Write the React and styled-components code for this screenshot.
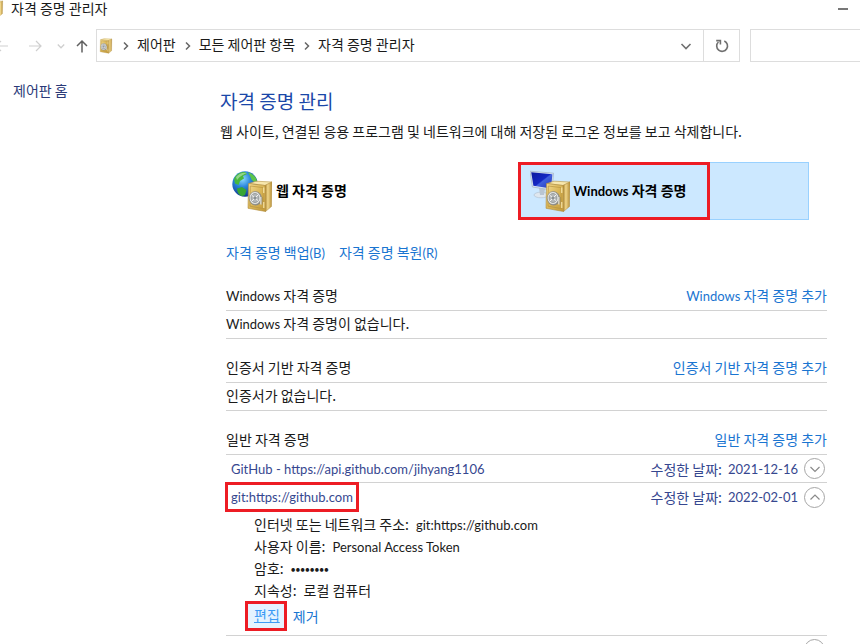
import React, {useState} from "react";
import styled, {createGlobalStyle} from "styled-components";

const GlobalStyle = createGlobalStyle`
  * {
    box-sizing: border-box;
  }

  body {
    margin: 0;
    background: #ffffff;
    color: #1a1a1a;
    font-family: "Noto Sans CJK KR", "Noto Sans", sans-serif;
    font-size: 14px;
    line-height: 20px;
  }

  button,
  input {
    font: inherit;
    color: inherit;
  }
`;

// Gold safe shared by both vault icons
const Safe = ({id}) => (
  <g>
    <defs>
      <linearGradient id={`${id}-front`} x1="0" y1="0" x2="1" y2="1">
        <stop offset="0" stopColor="#f3dc93" />
        <stop offset="0.5" stopColor="#d9b556" />
        <stop offset="1" stopColor="#c39a3b" />
      </linearGradient>
      <linearGradient id={`${id}-side`} x1="0" y1="0" x2="1" y2="0">
        <stop offset="0" stopColor="#a87f28" />
        <stop offset="0.4" stopColor="#f0d68a" />
        <stop offset="1" stopColor="#b48c35" />
      </linearGradient>
    </defs>
    <path d="M17 13.5 L24 11.2 L40 12 L33 15.5 Z" fill="#f7e7ae" stroke="#b9963f" strokeWidth="0.6" />
    <path d="M33 15.5 L40 12 L39.5 36.5 L33.5 41.5 Z" fill={`url(#${id}-side)`} stroke="#b08c3c" strokeWidth="0.5" />
    <path d="M16.5 13.5 L33 15.5 L33.5 41.5 L16 38.3 Z" fill={`url(#${id}-front)`} stroke="#b08c3c" strokeWidth="0.6" />
    <path d="M18.3 16 L31 17.6 L31.3 38.6 L18 36.2 Z" fill="none" stroke="#b8943f" strokeWidth="0.7" />
    <path d="M31.8 17.5 V23 M31.8 32 V38" stroke="#fff0b9" strokeWidth="1" />
    <ellipse cx="23.6" cy="28.5" rx="6.3" ry="7" fill="#8e8c86" />
    <ellipse cx="23" cy="28" rx="5.8" ry="6.5" fill="#e3e4e2" stroke="#77746b" strokeWidth="0.5" />
    <ellipse cx="23" cy="28" rx="3.9" ry="4.5" fill="#b4b8b9" stroke="#8c9092" strokeWidth="0.8" />
    <path d="M20 25.4 L26 30.6 M26 25 L20 31" stroke="#f2f2f2" strokeWidth="1" />
    <circle cx="23" cy="28" r="1.3" fill="#8a9093" />
    <path d="M29 27 V34.5" stroke="#e9e8e1" strokeWidth="1.4" />
    <path d="M30 27 V34.5" stroke="#77705c" strokeWidth="0.6" />
  </g>
);

const WebVaultIcon = () => (
  <svg width="40" height="42" viewBox="0 0 40 42" aria-hidden="true">
    <defs>
      <radialGradient id="globe" cx="0.4" cy="0.3" r="0.7">
        <stop offset="0" stopColor="#8fdcff" />
        <stop offset="0.45" stopColor="#2b86dc" />
        <stop offset="1" stopColor="#123a8f" />
      </radialGradient>
    </defs>
    <circle cx="13" cy="14" r="12.7" fill="url(#globe)" />
    <path d="M2 9 C4 4 9 1.5 13 2 L15 4 L11 6 L12 8.5 L8 11 L6.5 15 L3 13.5 Z" fill="#49b83d" />
    <path d="M16 2.2 C21 3.5 24 7 25 11 L22 12 L19.5 9.5 L18 6 Z" fill="#5cc549" />
    <path d="M5 18.5 L10 17 L14.5 20 L13 25 L10 26.2 C7 25.2 5 22.5 5 18.5 Z" fill="#37a534" />
    <path d="M4 7 C7 3 12 2 15 3 C12 4 8 6 5 10 Z" fill="#ffffff" opacity="0.4" />
    <Safe id="web-safe" />
  </svg>
);

const WindowsVaultIcon = () => (
  <svg width="40" height="42" viewBox="0 0 40 42" aria-hidden="true">
    <defs>
      <linearGradient id="screen" x1="0" y1="0" x2="1" y2="1">
        <stop offset="0" stopColor="#0d1a9c" />
        <stop offset="0.5" stopColor="#1428c4" />
        <stop offset="0.55" stopColor="#3f60de" />
        <stop offset="1" stopColor="#2435b8" />
      </linearGradient>
    </defs>
    <ellipse cx="11" cy="25" rx="7" ry="2.8" fill="#dfe7ef" stroke="#afbdcc" strokeWidth="0.6" />
    <path d="M9 18 L15 19 L14 25 L10 25 Z" fill="#b9c5d2" />
    <path d="M0 1.2 L23.5 3.2 L22 20 L2.4 17 Z" fill="#dce7f2" stroke="#9fb0c3" strokeWidth="0.7" />
    <path d="M1.2 2.2 L22.4 4.2 L21 18.6 L3.4 15.8 Z" fill="url(#screen)" />
    <Safe id="windows-safe" />
  </svg>
);

const SafeIcon = ({size = 16}) => (
  <svg width={size} height={size} viewBox="14 10 28 33" aria-hidden="true">
    <Safe id={`safe-${size}`} />
  </svg>
);

const Glyph = ({d, size = 14, width = 1.5}) => (
  <svg width={size} height={size} viewBox="0 0 14 14" fill="none" stroke="currentColor" strokeWidth={width} aria-hidden="true">
    <path d={d} />
  </svg>
);

const BACK = "M13 7 H1 M6 2 L1 7 L6 12";
const FORWARD = "M1 7 H13 M8 2 L13 7 L8 12";
const UP = "M7 13.5 V2 M2 7 L7 2 L12 7";
const CHEVRON_DOWN = "M2.5 5 L7 9.5 L11.5 5";
const CHEVRON_UP = "M2.5 9.5 L7 5 L11.5 9.5";
const CHEVRON_RIGHT = "M5 3.5 L8.5 7 L5 10.5";

const RefreshIcon = () => (
  <svg width="14" height="14" viewBox="0 0 14 14" fill="none" stroke="currentColor" strokeWidth="1.6" aria-hidden="true">
    <path d="M9.3 2 A5.4 5.4 0 1 1 3.4 3" />
    <path d="M1.2 1.6 H5.4 V5.6" />
  </svg>
);

const details = [
  {label: "인터넷 또는 네트워크 주소:", value: "git:https://github.com", latin: true},
  {label: "사용자 이름:", value: "Personal Access Token", latin: true},
  {label: "암호:", value: "••••••••"},
  {label: "지속성:", value: "로컬 컴퓨터"},
];

const Credential = ({name, date, open, marked, onToggle}) => (
  <EntryRow>
    <Name>
      {name}
      {marked && <Marker $v={5} $h={6} />}
    </Name>
    <Modified>
      <span>수정한 날짜:</span>
      <DateText>{date}</DateText>
      <Expander type="button" aria-label="세부 정보" aria-expanded={open} onClick={onToggle}>
        <Glyph d={open ? CHEVRON_UP : CHEVRON_DOWN} size={14} width={1.2} />
      </Expander>
    </Modified>
  </EntryRow>
);

const App = () => {
  const [open, setOpen] = useState(true);

  return (
    <Window>
      <GlobalStyle />
      <TitleBar>
        <TitleIcon>
          <SafeIcon size={17} />
        </TitleIcon>
        <WindowTitle>자격 증명 관리자</WindowTitle>
        <Minimize type="button" aria-label="최소화" />
      </TitleBar>

      <Toolbar>
        <NavButtons>
          <BackButton type="button" aria-label="뒤로" disabled>
            <Glyph d={BACK} width={1.2} />
          </BackButton>
          <NavButton type="button" aria-label="앞으로" disabled>
            <Glyph d={FORWARD} width={1.2} />
          </NavButton>
          <RecentButton type="button" aria-label="최근 위치" disabled>
            <Glyph d={CHEVRON_DOWN} size={10} width={1.8} />
          </RecentButton>
          <NavButton type="button" aria-label="위로">
            <Glyph d={UP} />
          </NavButton>
        </NavButtons>
        <AddressBar aria-label="주소">
          <SafeIcon />
          {["제어판", "모든 제어판 항목", "자격 증명 관리자"].map((item) => (
            <Crumb key={item}>
              <Glyph d={CHEVRON_RIGHT} />
              <a href="#">{item}</a>
            </Crumb>
          ))}
          <DropButton type="button" aria-label="이전 위치">
            <Glyph d={CHEVRON_DOWN} width={1.6} />
          </DropButton>
          <RefreshButton type="button" aria-label="새로 고침">
            <RefreshIcon />
          </RefreshButton>
        </AddressBar>
        <Search type="search" aria-label="검색" />
      </Toolbar>

      <Body>
        <Sidebar>
          <HomeLink href="#">제어판 홈</HomeLink>
        </Sidebar>
        <Main>
          <Heading>자격 증명 관리</Heading>
          <Intro>
            웹 사이트, 연결된 응용 프로그램 및 네트워크에 대해 저장된 로그온 정보를 보고 삭제합니다.
          </Intro>

          <Vaults>
            <Vault type="button">
              <VaultLabel>
                <WebVaultIcon />
                <VaultName>웹 자격 증명</VaultName>
              </VaultLabel>
            </Vault>
            <Vault type="button" $selected>
              <VaultLabel>
                <WindowsVaultIcon />
                <VaultName>
                  <Latin>Windows</Latin> 자격 증명
                </VaultName>
                <Marker $v={1} $h={1} />
              </VaultLabel>
            </Vault>
          </Vaults>

          <Lists>
            <Backup>
              <Link href="#">
                자격 증명 백업<Latin>(B)</Latin>
              </Link>
              <Link href="#">
                자격 증명 복원<Latin>(R)</Latin>
              </Link>
            </Backup>

            <Section>
              <Row>
                <Title>
                  <Latin>Windows</Latin> 자격 증명
                </Title>
                <Link href="#">
                  <Latin>Windows</Latin> 자격 증명 추가
                </Link>
              </Row>
              <Row>
                <span>
                  <Latin>Windows</Latin> 자격 증명이 없습니다.
                </span>
              </Row>
            </Section>

            <Section>
              <Row>
                <Title>인증서 기반 자격 증명</Title>
                <Link href="#">인증서 기반 자격 증명 추가</Link>
              </Row>
              <Row>인증서가 없습니다.</Row>
            </Section>

            <Section>
              <Row>
                <Title>일반 자격 증명</Title>
                <Link href="#">일반 자격 증명 추가</Link>
              </Row>
              <Credential name="GitHub - https://api.github.com/jihyang1106" date="2021-12-16" />
              <Entry>
                <Credential
                  name="git:https://github.com"
                  date="2022-02-01"
                  open={open}
                  marked
                  onToggle={() => setOpen(!open)}
                />
                {open && (
                  <Details>
                    {details.map((item) => (
                      <Detail key={item.label}>
                        <dt>{item.label}</dt>
                        <dd>{item.latin ? <Latin>{item.value}</Latin> : item.value}</dd>
                      </Detail>
                    ))}
                    <Actions>
                      <EditLink href="#">
                        편집
                        <Marker $v={3} $h={3} />
                      </EditLink>
                      <Link href="#">제거</Link>
                    </Actions>
                  </Details>
                )}
              </Entry>
              <Credential name="" date="" />
            </Section>
          </Lists>
        </Main>
      </Body>
    </Window>
  );
};

const Window = styled.div`
  height: 100vh;
  display: flex;
  flex-direction: column;
  overflow: hidden;
`;

const Latin = styled.span`
  font-family: Lato, "Noto Sans CJK KR", sans-serif;
  font-size: 13px;
  line-height: 14px;
`;

const TitleBar = styled.header`
  display: flex;
  flex: none;
  align-items: center;
  height: 17px;
  padding-right: 12px;
`;

const TitleIcon = styled.span`
  display: flex;
  flex: none;
  margin-left: -12px;
`;

const WindowTitle = styled.span`
  flex: 1;
  margin-left: 6px;
  padding-bottom: 1px;
  line-height: 14px;
`;

const Minimize = styled.button`
  width: 10px;
  height: 2px;
  padding: 0;
  border: 0;
  background: #777777;
`;

const Toolbar = styled.div`
  display: flex;
  flex: none;
  align-items: center;
  height: 33px;
  margin-top: 12px;
`;

const NavButtons = styled.div`
  display: flex;
  flex: none;
  align-items: center;
  gap: 14px;
  width: 101px;
  margin-left: -5px;
`;

const NavButton = styled.button`
  display: flex;
  padding: 0;
  border: 0;
  background: none;
  color: #606060;

  &:disabled {
    color: #cfcfcf;
  }
`;

const BackButton = styled(NavButton)`
  margin-right: 5px;
`;

const RecentButton = styled(NavButton)`
  margin-right: -5px;
`;

const AddressBar = styled.nav`
  flex: 1;
  display: flex;
  align-items: center;
  height: 33px;
  padding-left: 1px;
  border: 1px solid #dddddd;
`;

const Crumb = styled.span`
  display: flex;
  align-items: center;
  gap: 4px;
  margin-left: 5px;

  svg {
    color: #666666;
  }

  a {
    padding-bottom: 3px;
    color: inherit;
    text-decoration: none;
  }
`;

const DropButton = styled.button`
  display: flex;
  align-items: center;
  justify-content: center;
  width: 34px;
  height: 100%;
  margin-left: auto;
  padding: 0;
  border: 0;
  background: none;
  color: #707070;
`;

const RefreshButton = styled(DropButton)`
  width: 36px;
  margin-left: 0;
  border-left: 1px solid #dddddd;
`;

const Search = styled.input`
  flex: none;
  width: 112px;
  height: 33px;
  margin-left: 10px;
  margin-right: -2px;
  border: 1px solid #dddddd;
  background: #ffffff;
`;

const Body = styled.div`
  display: flex;
  flex: 1;
  min-height: 0;
`;

const Sidebar = styled.aside`
  flex: none;
  width: 220px;
  padding: 18px 13px;
`;

const HomeLink = styled.a`
  color: #2b3a78;
  text-decoration: none;
`;

const Main = styled.main`
  flex: 1;
  min-width: 0;
  padding: 26px 33px 0 0;
`;

const Heading = styled.h1`
  margin: 0;
  color: #1a47a8;
  font-size: 19px;
  font-weight: 400;
  line-height: 26px;
`;

const Intro = styled.p`
  margin: 7px 0 21px;
  white-space: nowrap;
`;

const Vaults = styled.div`
  display: grid;
  grid-template-columns: 1fr 1fr;
  gap: 6px;
  margin-right: 18px;
`;

const Vault = styled.button`
  display: flex;
  height: 58px;
  padding: 0;
  border: 1px solid ${({$selected}) => ($selected ? "#99d1ff" : "transparent")};
  background: ${({$selected}) => ($selected ? "#cce8ff" : "transparent")};
  color: #000000;
  font-weight: 700;
`;

const VaultLabel = styled.span`
  position: relative;
  display: flex;
  align-items: center;
  gap: 4px;
  height: 100%;
  padding: 0 23px 1px 11px;
`;

const VaultName = styled.span`
  padding-bottom: 2px;
`;

const Marker = styled.span`
  position: absolute;
  inset: ${({$v, $h}) => `-${$v}px -${$h}px`};
  border: 3px solid #ed1c24;
  pointer-events: none;
`;

const Lists = styled.div`
  padding-left: 6px;
`;

const Backup = styled.div`
  display: flex;
  gap: 14px;
  margin: 22px 0 21px;
`;

const Link = styled.a`
  color: #1a75d1;
  text-decoration: none;
`;

const Section = styled.section`
  margin-bottom: 16px;
`;

const Row = styled.div`
  display: flex;
  align-items: center;
  justify-content: space-between;
  height: 28px;
  padding-bottom: 3px;
  border-bottom: 1px solid #d2d2d2;
`;

const EntryRow = styled(Row)`
  padding: 0 2px 0 5px;
`;

const Title = styled.h2`
  margin: 0;
  font-size: 14px;
  font-weight: 400;
`;

const Name = styled(Latin)`
  position: relative;
  color: #36478f;
  line-height: 20px;
`;

const Modified = styled.span`
  display: flex;
  align-items: center;
  gap: 6px;
  color: #36478f;
`;

const DateText = styled(Latin)`
  min-width: 67px;
`;

const Expander = styled.button`
  display: flex;
  align-items: center;
  justify-content: center;
  width: 21px;
  height: 21px;
  padding: 0;
  border: 1px solid #a6a6a6;
  border-radius: 50%;
  background: #ffffff;
  color: #8a8a8a;
`;

const Entry = styled.div`
  border-bottom: 1px solid #d2d2d2;

  ${EntryRow} {
    border-bottom: 0;
  }
`;

const Details = styled.dl`
  margin: 0;
  padding: 2px 0 4px 28px;
`;

const Detail = styled.div`
  display: flex;
  gap: 7px;
  line-height: 22px;

  dd {
    margin: 0;
  }
`;

const Actions = styled.div`
  display: flex;
  align-items: center;
  gap: 9px;
  height: 30px;
`;

const EditLink = styled(Link)`
  position: relative;
  margin-left: -6px;
  padding: 1px 4px 3px 6px;
  background: #e5f3ff;
  color: #3d9bf5;
  text-decoration: underline;
`;

export default App;
